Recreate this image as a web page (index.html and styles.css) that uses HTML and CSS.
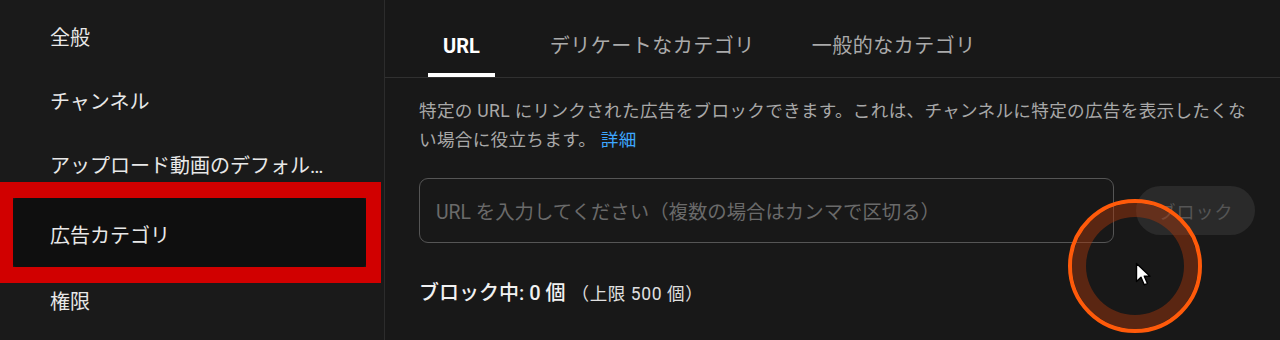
FILE: index.html
```html
<!DOCTYPE html>
<html lang="ja">
<head>
<meta charset="utf-8">
<title>広告カテゴリ</title>
<link rel="stylesheet" href="styles.css">
</head>
<body>
<div class="app">
  <nav class="sidebar">
    <div class="nav-item">全般</div>
    <div class="nav-item">チャンネル</div>
    <div class="nav-item">アップロード動画のデフォルト設定</div>
    <div class="nav-item active">広告カテゴリ</div>
    <div class="nav-item">権限</div>
  </nav>
  <main class="main">
    <div class="tabs">
      <div class="tab tab-url active">URL</div>
      <div class="tab tab-sensitive">デリケートなカテゴリ</div>
      <div class="tab tab-general">一般的なカテゴリ</div>
    </div>
    <div class="content">
      <p class="desc">特定の URL にリンクされた広告をブロックできます。これは、チャンネルに特定の広告を表示したくない場合に役立ちます。&nbsp;<a class="link">詳細</a></p>
      <div class="input-row">
        <div class="url-input">URL を入力してください（複数の場合はカンマで区切る）</div>
        <div class="block-btn">ブロック</div>
      </div>
      <div class="status">
        <span class="status-main">ブロック中: 0 個</span>
        <span class="status-limit">（上限 500 個）</span>
      </div>
    </div>
    <div class="cursor-ring">
      <svg class="cursor" width="18" height="26" viewBox="0 0 18 26">
        <path d="M1.5 1.5 L1.5 19.5 L6 15.3 L9.2 22.8 L12.4 21.4 L9.3 14.2 L15 14.2 Z" fill="#ffffff" stroke="#000000" stroke-width="1.4" stroke-linejoin="round"/>
      </svg>
    </div>
  </main>
</div>
</body>
</html>
```

FILE: styles.css
```css
* { box-sizing: border-box; }
html, body {
  margin: 0;
  padding: 0;
  background: #191919;
  font-family: Roboto, "Noto Sans CJK JP", sans-serif;
  overflow: hidden;
}
.app {
  display: flex;
  width: 1280px;
  height: 340px;
}
.sidebar {
  width: 385px;
  flex: none;
  background: #1a1a1a;
  border-right: 1px solid #2c2c2c;
  padding-top: 6px;
  display: flex;
  flex-direction: column;
}
.nav-item {
  height: 64px;
  line-height: 64px;
  padding: 0 48px 0 50px;
  font-size: 20px;
  color: #e8e8e8;
  white-space: nowrap;
  overflow: hidden;
  text-overflow: ellipsis;
  flex: none;
}
.nav-item.active {
  position: relative;
  overflow: visible;
  height: 69px;
  line-height: 76px;
  margin-left: 13px;
  width: 353px;
  padding-left: 37px;
  background: #0f0f0f;
  border-radius: 4px;
}
.nav-item:last-child {
  line-height: 70px;
}
.nav-item.active::after {
  content: "";
  position: absolute;
  top: -16px;
  left: -13px;
  right: -15px;
  bottom: -16px;
  border-style: solid;
  border-color: #d10000;
  border-width: 16px 15px 16px 13px;
  pointer-events: none;
}
.main {
  flex: 1;
  position: relative;
  background: #181818;
}
.tabs {
  display: flex;
  height: 78px;
  border-bottom: 1px solid #303030;
  padding-left: 43px;
}
.tab {
  height: 77px;
  padding-top: 32px;
  line-height: 28px;
  font-size: 20px;
  color: #aaaaaa;
  border-bottom: 4px solid transparent;
  white-space: nowrap;
  letter-spacing: 0.5px;
}
.tab-url {
  padding-left: 15px;
  padding-right: 15px;
  margin-right: 55px;
  font-weight: 700;
  letter-spacing: 0;
}
.tab-sensitive {
  margin-right: 57px;
}
.tab.active {
  color: #ffffff;
  border-bottom-color: #ffffff;
}
.content {
  padding: 0 25px 0 34px;
}
.desc {
  margin: 19px 0 0;
  font-size: 17.6px;
  line-height: 29px;
  letter-spacing: 0.3px;
  color: #a8a8a8;
}
.link {
  color: #3ea6ff;
}
.input-row {
  display: flex;
  align-items: center;
  gap: 22px;
  margin-top: 23px;
}
.url-input {
  width: 695px;
  height: 65px;
  border: 1px solid #555555;
  border-radius: 9px;
  padding-left: 16px;
  display: flex;
  align-items: center;
  font-size: 19.4px;
  color: #6a6a6a;
  white-space: nowrap;
}
.block-btn {
  width: 119px;
  height: 49px;
  border-radius: 25px;
  background: #2a2a2a;
  color: #555555;
  font-size: 18px;
  display: flex;
  align-items: center;
  justify-content: center;
  letter-spacing: 1px;
}
.status {
  margin-top: 35px;
  display: flex;
  align-items: baseline;
  gap: 6px;
  line-height: 30px;
}
.status-main {
  font-size: 20px;
  color: #f1f1f1;
  font-weight: 500;
}
.status-limit {
  font-size: 17.5px;
  color: #e0e0e0;
  letter-spacing: 0.6px;
}
.cursor-ring {
  position: absolute;
  left: 683px;
  top: 199px;
  width: 134px;
  height: 134px;
  border-radius: 50%;
  border: 4px solid #ff5a0a;
  box-shadow: inset 0 0 0 14px rgba(170, 55, 10, 0.45);
  pointer-events: none;
}
.cursor {
  position: absolute;
  left: 63px;
  top: 59px;
}
```
